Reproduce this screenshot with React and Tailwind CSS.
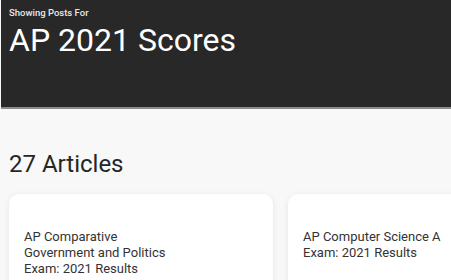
export default function App() {
  const articles = [
    "AP Comparative Government and Politics Exam: 2021 Results",
    "AP Computer Science A Exam: 2021 Results",
  ];

  return (
    <div
      className="h-[280px] w-[451px] overflow-hidden bg-[#f8f8f8]"
      style={{ fontFamily: "Roboto, 'Liberation Sans', sans-serif" }}
    >
      <header className="ml-px h-[109px] border-b-2 border-[#8a8a8a] bg-[#282828] px-2 pt-[7px] text-white">
        <p className="text-[9.5px] font-medium leading-[12px] text-[#e8e8e8]">Showing Posts For</p>
        <h1 className="mt-[2px] text-[32px] leading-[38px]">AP 2021 Scores</h1>
      </header>

      <section className="px-[9px] pt-[41px]">
        <h2 className="text-[24px] leading-[28px] text-[#262626]">27 Articles</h2>

        <div className="mt-[16px] flex gap-[15px]">
          {articles.map((title) => (
            <article
              key={title}
              className="h-[120px] w-[264px] shrink-0 rounded-[10px] bg-white px-[15px] pt-[35px] shadow-[0_1px_6px_rgba(0,0,0,0.08)]"
            >
              <h3 className="w-[148px] text-[13px] leading-[16px] text-[#333333]">{title}</h3>
            </article>
          ))}
        </div>
      </section>
    </div>
  );
}
